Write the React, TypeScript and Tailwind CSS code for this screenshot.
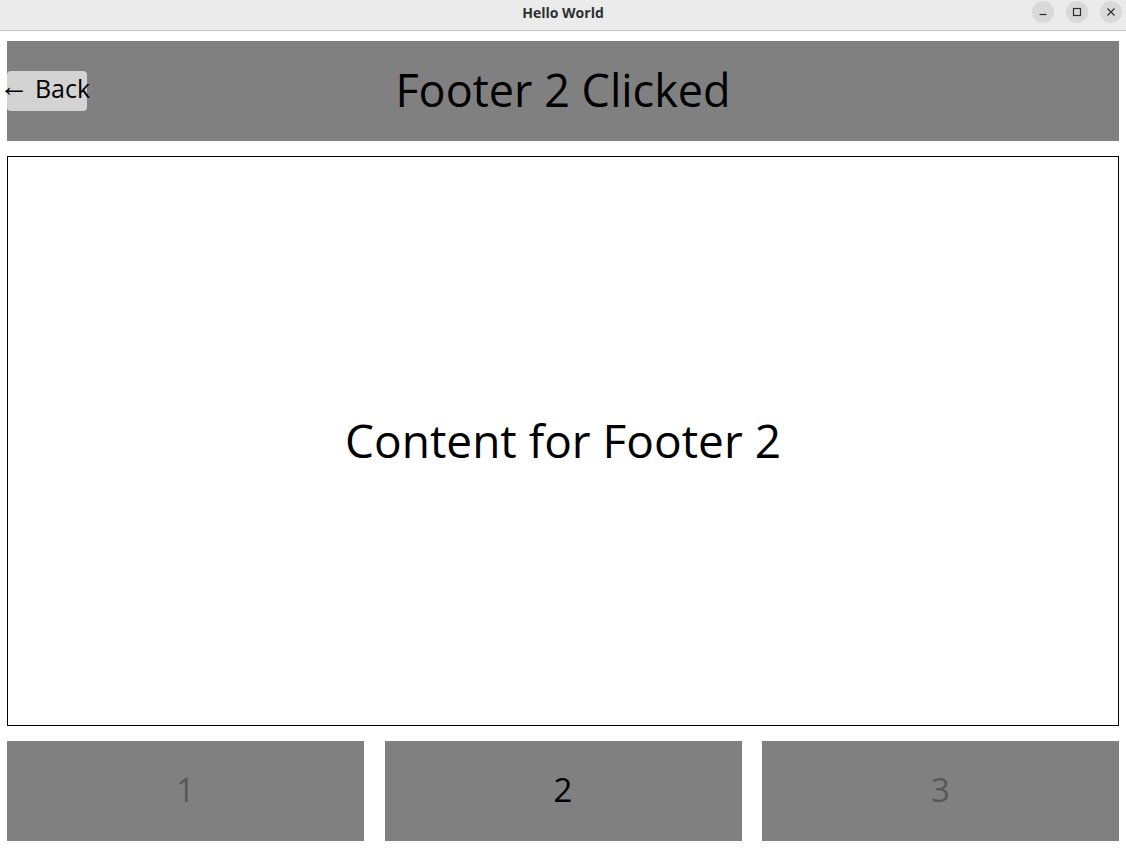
import React from "react";

const font = { fontFamily: '"Open Sans", "Noto Sans", sans-serif' };

const TitleBar = () => {
  return (
    <div className="relative h-[31px] bg-[#ebebeb] border-b border-[#c6c6c6] flex items-center justify-center">
      <span className="text-[14px] font-bold text-[#303030] -mt-[6px]" style={font}>
        Hello World
      </span>
      <div className="absolute right-[4px] top-[1px] flex gap-[12px]">
        <div className="w-[22px] h-[22px] rounded-full bg-[#d9d9d9] flex items-center justify-center">
          <svg width="10" height="10" viewBox="0 0 10 10">
            <line x1="1.5" y1="7.5" x2="8.5" y2="7.5" stroke="#2e2e2e" strokeWidth="1.2" />
          </svg>
        </div>
        <div className="w-[22px] h-[22px] rounded-full bg-[#d9d9d9] flex items-center justify-center">
          <svg width="10" height="10" viewBox="0 0 10 10">
            <rect x="1.5" y="1.5" width="7" height="7" fill="none" stroke="#2e2e2e" strokeWidth="1.2" />
          </svg>
        </div>
        <div className="w-[22px] h-[22px] rounded-full bg-[#d9d9d9] flex items-center justify-center">
          <svg width="10" height="10" viewBox="0 0 10 10">
            <path d="M1.5 1.5 L8.5 8.5 M8.5 1.5 L1.5 8.5" stroke="#2e2e2e" strokeWidth="1.2" />
          </svg>
        </div>
      </div>
    </div>
  );
};

const FooterTab = ({ label, active }: { label: string; active?: boolean }) => {
  return (
    <div
      className={
        "h-[100px] bg-[#808080] flex items-center justify-center text-[33px] " +
        (active ? "text-black" : "text-[#575757]")
      }
    >
      <span className="-mt-[2px]">{label}</span>
    </div>
  );
};

const App = () => {
  return (
    <div className="w-[1126px] h-[849px] bg-white overflow-hidden" style={font}>
      <TitleBar />
      <div className="px-[7px] pt-[10px] flex flex-col gap-[15px]">
        <div className="relative h-[100px] bg-[#808080] flex items-center justify-center">
          <button className="absolute left-0 top-[30px] w-[80px] h-[40px] bg-[#d3d3d3] rounded-[4px] flex items-center justify-center text-[25px] text-black leading-none whitespace-nowrap">
            <span className="-mt-[5px] -ml-[5px] flex items-center gap-[6px]">
              <span className="text-[30px] inline-block -translate-y-[4px]">←</span>
              <span>Back</span>
            </span>
          </button>
          <h1 className="text-[45px] leading-none text-black -mt-[3px]">Footer 2 Clicked</h1>
        </div>
        <div className="h-[570px] border border-black flex items-center justify-center">
          <p className="text-[46px] leading-none text-black -mt-[3px]">Content for Footer 2</p>
        </div>
        <div className="grid grid-cols-[357px_357px_357px] justify-between">
          <FooterTab label="1" />
          <FooterTab label="2" active />
          <FooterTab label="3" />
        </div>
      </div>
    </div>
  );
};

export default App;
